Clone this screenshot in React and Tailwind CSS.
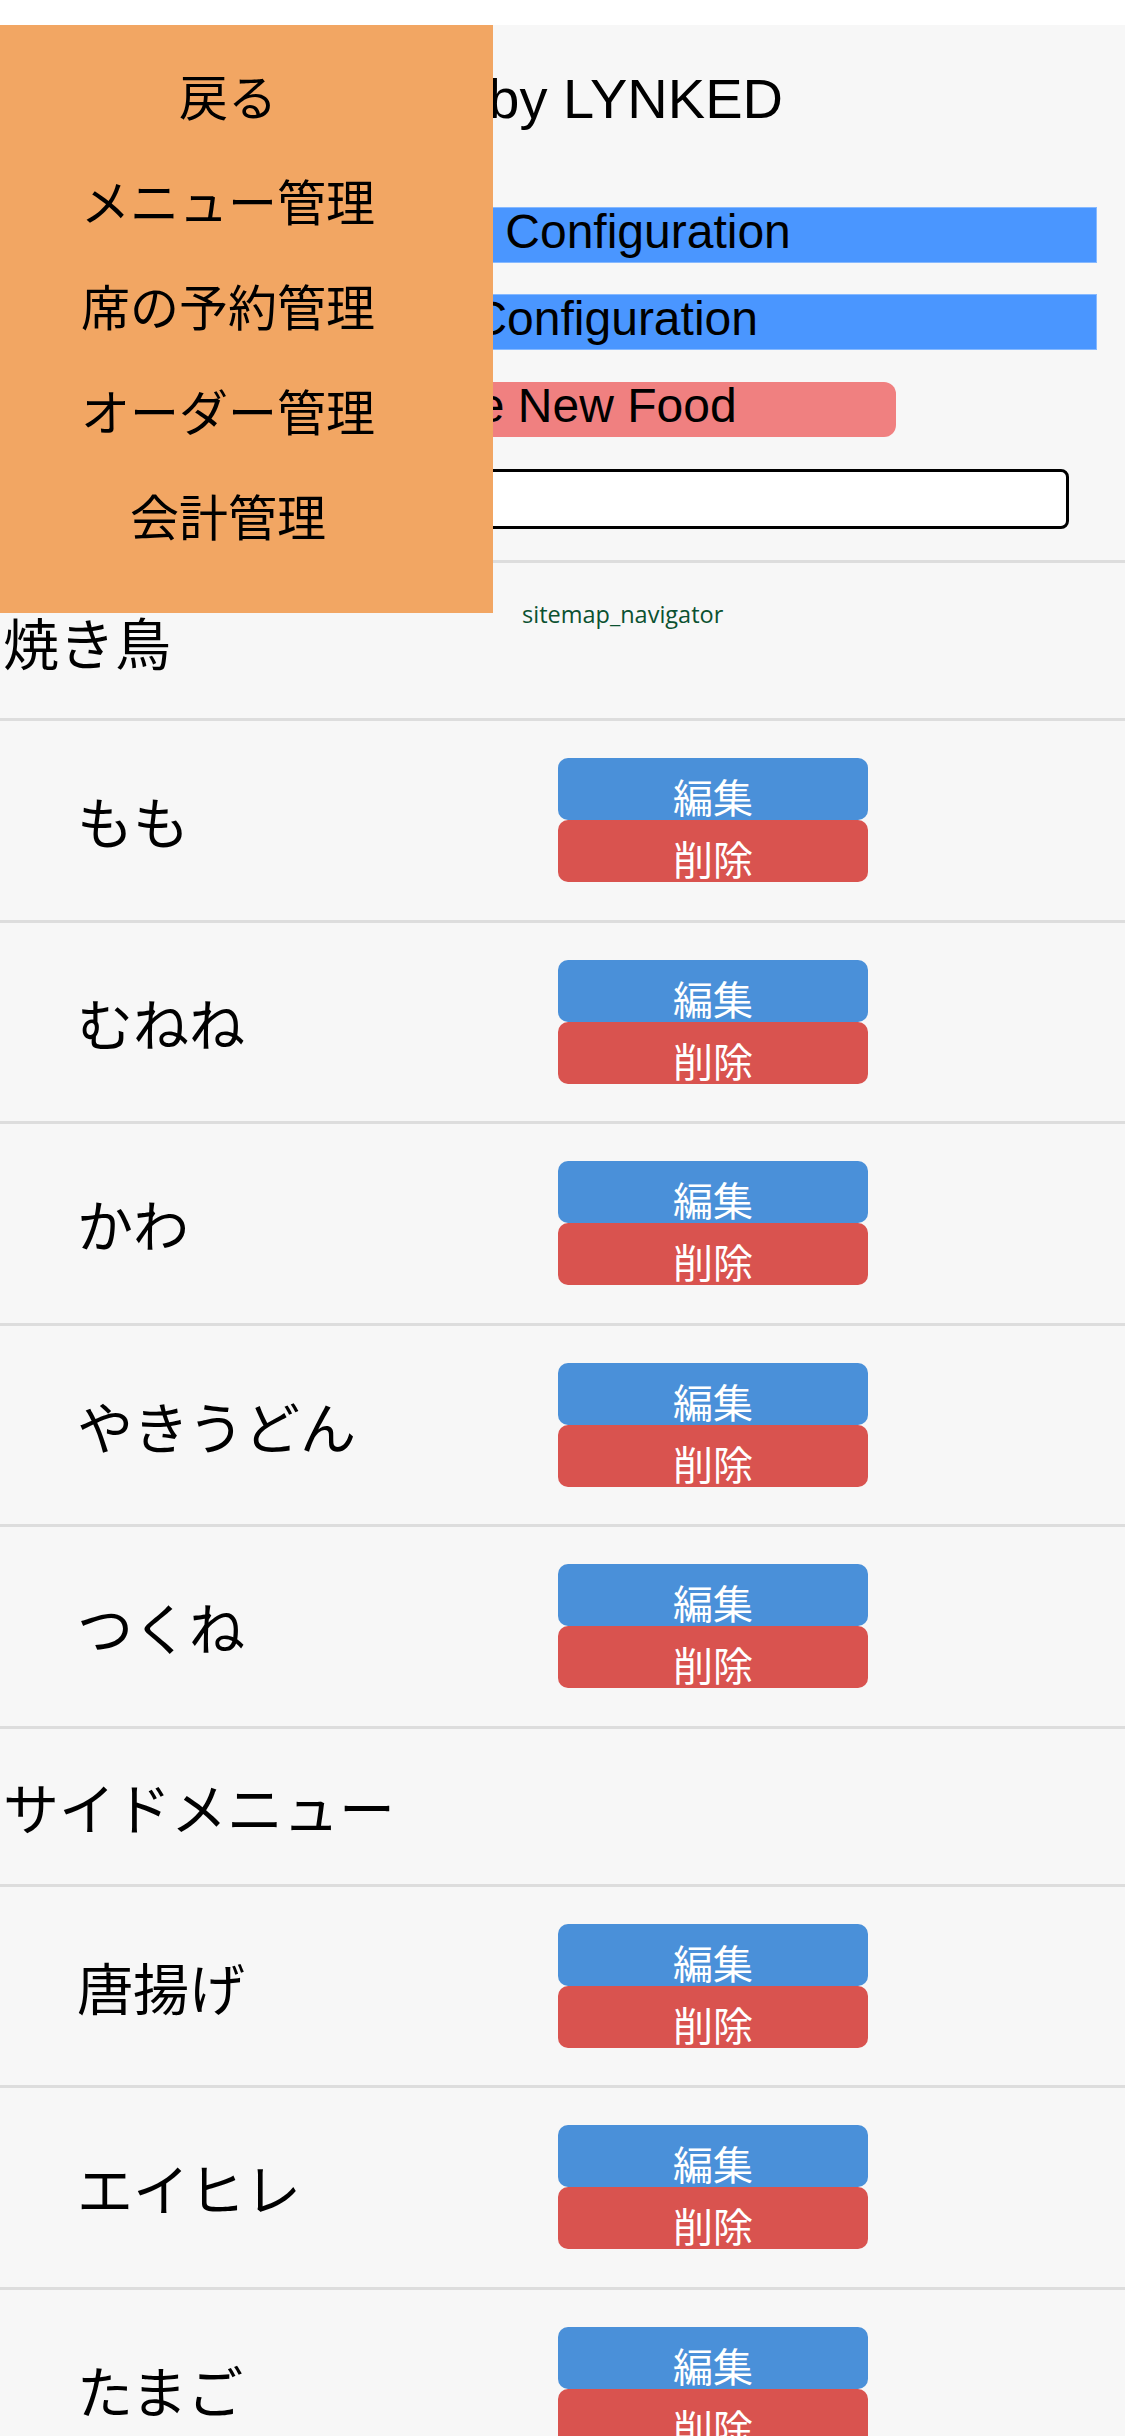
const navItems = ["戻る", "メニュー管理", "席の予約管理", "オーダー管理", "会計管理"];

const categories = [
  { name: "焼き鳥", items: ["もも", "むねね", "かわ", "やきうどん", "つくね"] },
  { name: "サイドメニュー", items: ["唐揚げ", "エイヒレ", "たまご"] },
];

const cjk = "font-['Noto_Sans_CJK_JP','Noto_Sans_CJK_SC',sans-serif]";

const FoodRow = ({ name }) => (
  <div className="h-[201.5px] border-b-[3px] border-[#dddddd] flex items-center">
    <div className={`w-[558px] shrink-0 pl-[77px] text-[56px] leading-normal ${cjk}`}>{name}</div>
    <div className="w-[310px] flex flex-col">
      <button className={`block w-full h-[62px] rounded-[10px] bg-[#4a90d9] text-white text-[40px] leading-none pt-[14px] ${cjk}`}>
        編集
      </button>
      <button className={`block w-full h-[62px] rounded-[10px] bg-[#d9534f] text-white text-[40px] leading-none pt-[14px] ${cjk}`}>
        削除
      </button>
    </div>
  </div>
);

export default function App() {
  return (
    <div className="relative h-[2436px] overflow-hidden bg-white text-black font-['Liberation_Sans','Noto_Sans_CJK_JP',sans-serif]">
      <div className="mt-[25px] min-h-[2411px] bg-[#f7f7f7] flex flex-col">
        <header className="border-b-[3px] border-[#dddddd]">
          <div className="w-[1097px] flex flex-col items-center pt-[42px] pb-[31px]">
            <h1 className="h-[64px] text-[56px] leading-[64px] font-normal">Admin by LYNKED</h1>
            <button className="mt-[76px] w-full h-[56px] pr-[9px] bg-[#4a96ff] border border-[#86b9ff] text-[48px] leading-[48px] flex justify-center items-start">
              Category Configuration
            </button>
            <button className="mt-[31px] w-full h-[56px] bg-[#4a96ff] border border-[#86b9ff] text-[48px] leading-[48px] flex justify-center items-start">
              Menu Configuration
            </button>
            <button className="mt-[32px] w-[694px] h-[55px] rounded-[12px] bg-[#f08080] text-[48px] leading-[48px] flex justify-center items-start">
              Create New Food
            </button>
            <input
              type="text"
              className="mt-[32px] w-[1041px] h-[60px] rounded-[8px] border-[3px] border-black bg-white"
            />
          </div>
        </header>

        {categories.map((cat) => (
          <section key={cat.name}>
            <div className={`h-[158px] border-b-[3px] border-[#dddddd] flex items-center pl-[3px] text-[56px] leading-normal ${cjk}`}>
              {cat.name}
            </div>
            {cat.items.map((item) => (
              <FoodRow key={item} name={item} />
            ))}
          </section>
        ))}
      </div>

      {/* side drawer */}
      <nav className="absolute left-0 top-[25px] w-[493px] h-[588px] bg-[#f2a663] pt-[17.5px]">
        <ul className="w-[456px]">
          {navItems.map((label) => (
            <li key={label} className={`h-[105px] flex items-center justify-center text-[49px] leading-normal ${cjk}`}>
              {label}
            </li>
          ))}
        </ul>
      </nav>

      <span className="absolute left-[522px] top-[599px] text-[23.5px] leading-[31px] text-[#0b5130] font-['Open_Sans',sans-serif]">
        sitemap_navigator
      </span>
    </div>
  );
}
